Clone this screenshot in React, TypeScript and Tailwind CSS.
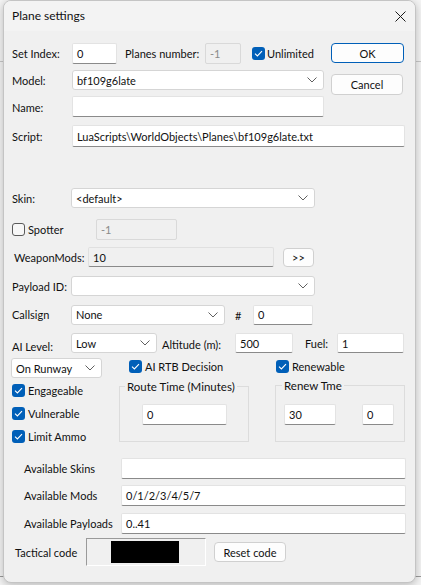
import React from "react";

const Chevron = () => (
  <svg width="10" height="6" viewBox="0 0 10 6" className="shrink-0">
    <path d="M0.5 0.5 L5 5 L9.5 0.5" stroke="#606060" strokeWidth="1" fill="none" />
  </svg>
);

function TextBox({ w, h = 21, value = "", ml = 0 }: { w: number; h?: number; value?: string; ml?: number }) {
  return (
    <div
      className="bg-white border border-[#e3e3e3] border-b-[#8a8a8a] rounded-[2px] px-[4px] flex items-center text-[#111] whitespace-nowrap overflow-hidden shrink-0"
      style={{ width: w, height: h, marginLeft: ml }}
    >
      {value}
    </div>
  );
}

function Disabled({ w, h = 21, value = "" }: { w: number; h?: number; value?: string }) {
  return (
    <div
      className="bg-[#f0f0f0] border border-[#d9d9d9] rounded-[2px] px-[4px] flex items-center text-[#8a8a8a] shrink-0"
      style={{ width: w, height: h }}
    >
      {value}
    </div>
  );
}

function Combo({ w, h = 20, value = "" }: { w: number; h?: number; value?: string }) {
  return (
    <div
      className="bg-white border border-[#d5d5d5] rounded-[3px] pl-[4px] pr-[6px] flex items-center justify-between text-[#111] shrink-0 whitespace-nowrap"
      style={{ width: w, height: h }}
    >
      <span>{value}</span>
      <Chevron />
    </div>
  );
}

function Btn({ w, h = 20, label, primary = false }: { w: number; h?: number; label: string; primary?: boolean }) {
  return (
    <div
      className={
        "bg-[#fdfdfd] rounded-[4px] flex items-center justify-center text-[#111] shrink-0 border whitespace-nowrap " +
        (primary ? "border-[#005fb8]" : "border-[#d0d0d0]")
      }
      style={{ width: w, height: h }}
    >
      {label}
    </div>
  );
}

function Check({ checked, label, gap = 3 }: { checked: boolean; label: string; gap?: number }) {
  return (
    <div className="flex items-center h-[16px] whitespace-nowrap">
      {checked ? (
        <div className="w-[13px] h-[13px] rounded-[3px] bg-[#005fb8] flex items-center justify-center shrink-0">
          <svg width="9" height="7" viewBox="0 0 9 7">
            <path d="M1 3.6 L3.4 6 L8 1.2" stroke="white" strokeWidth="1.1" fill="none" />
          </svg>
        </div>
      ) : (
        <div className="w-[13px] h-[13px] rounded-[3px] border border-[#5a5a5a] bg-[#f7f7f7] shrink-0" />
      )}
      <span style={{ marginLeft: gap }}>{label}</span>
    </div>
  );
}

export default function App() {
  return (
    <div className="relative w-[421px] h-[585px] overflow-hidden bg-[#f4f4f4] font-['Lato',sans-serif] text-[11px] leading-none text-[#111] whitespace-nowrap">
      {/* backdrop */}
      <div className="absolute left-0 right-0 top-[61px] h-px bg-[#c8c8c8]" />
      <div className="absolute left-0 right-0 top-[576px] h-px bg-[#9a9a9a]" />

      <div className="absolute left-[3px] top-0 w-[413px] h-[583px] rounded-[8px] border border-[#c4c4c4] bg-[#f0f0f0] shadow-[0_2px_8px_rgba(0,0,0,0.25)] overflow-hidden flex flex-col">
        {/* title bar */}
        <div className="h-[30px] bg-[#f3f3f3] flex items-center justify-between pl-[8px] pr-[9px] shrink-0">
          <span className="text-[12px]">Plane settings</span>
          <svg width="11" height="11" viewBox="0 0 11 11">
            <path d="M0.5 0.5 L10.5 10.5 M10.5 0.5 L0.5 10.5" stroke="#1a1a1a" strokeWidth="1" />
          </svg>
        </div>

        {/* body */}
        <div className="flex flex-col pl-[8px]">
          {/* top block */}
          <div className="flex">
            <div className="w-[319px] flex flex-col">
              <div className="flex items-center h-[21px] mt-[12px]">
                <span className="w-[60px]">Set Index:</span>
                <TextBox w={45} value="0" />
                <span className="w-[80px] ml-[8px]">Planes number:</span>
                <Disabled w={36} value="-1" />
                <div className="ml-[11px]">
                  <Check checked label="Unlimited" gap={2} />
                </div>
              </div>
              <div className="flex items-center h-[20px] mt-[6px]">
                <span className="w-[60px]">Model:</span>
                <Combo w={252} value="bf109g6late" />
              </div>
              <div className="flex items-center h-[21px] mt-[6px]">
                <span className="w-[60px] mt-[2px]">Name:</span>
                <TextBox w={252} />
              </div>
            </div>
            <div className="flex flex-col">
              <div className="mt-[12px]">
                <Btn w={73} h={20} label="OK" primary />
              </div>
              <div className="mt-[11px]">
                <Btn w={72} h={21} label="Cancel" />
              </div>
            </div>
          </div>

          <div className="flex items-center h-[22px] mt-[8px]">
            <span className="w-[60px]">Script:</span>
            <TextBox w={333} h={22} value="LuaScripts\WorldObjects\Planes\bf109g6late.txt" />
          </div>

          <div className="flex items-center h-[20px] mt-[41px]">
            <span className="w-[59px]">Skin:</span>
            <Combo w={244} value="<default>" />
          </div>

          <div className="flex items-center h-[21px] mt-[11px]">
            <div className="w-[84px]">
              <Check checked={false} label="Spotter" />
            </div>
            <Disabled w={81} value="-1" />
          </div>

          <div className="flex items-center h-[20px] mt-[7px]">
            <span className="w-[74px] ml-[2px]">WeaponMods:</span>
            <div className="w-[186px] h-[20px] bg-[#f0f0f0] border border-[#e0e0e0] border-b-[#8a8a8a] rounded-[2px] px-[4px] flex items-center">
              10
            </div>
            <div className="ml-[9px]">
              <Btn w={31} h={19} label=">>" />
            </div>
          </div>

          <div className="flex items-center h-[20px] mt-[9px]">
            <span className="w-[59px]">Payload ID:</span>
            <Combo w={244} />
          </div>

          <div className="flex items-center h-[21px] mt-[8px]">
            <span className="w-[59px]">Callsign</span>
            <Combo w={154} value="None" />
            <span className="w-[18px] ml-[10px] mt-[2px]">#</span>
            <TextBox w={60} h={20} value="0" />
          </div>

          <div className="flex items-center h-[20px] mt-[8px]">
            <span className="w-[59px] mt-[6px]">AI Level:</span>
            <Combo w={86} value="Low" />
            <span className="w-[73px] ml-[5px] mt-[2px]">Altitude (m):</span>
            <TextBox w={58} h={20} value="500" />
            <span className="w-[32px] ml-[12px]">Fuel:</span>
            <TextBox w={67} h={20} value="1" />
          </div>

          {/* lower section */}
          <div className="flex h-[84px] mt-[5px] -ml-[1px]">
            <div className="w-[91px] flex flex-col">
              <Combo w={91} h={20} value="On Runway" />
              <div className="ml-[1px] mt-[4px] flex flex-col gap-[7px]">
                <Check checked label="Engageable" />
                <Check checked label="Vulnerable" />
                <Check checked label="Limit Ammo" />
              </div>
            </div>
            <div className="w-[130px] ml-[17px] flex flex-col">
              <div className="ml-[10px]">
                <Check checked label="AI RTB Decision" />
              </div>
              <fieldset className="mt-[7px] h-[62px] min-w-0 border border-[#dcdcdc] px-[22px]">
                <legend className="-ml-[17px] px-[2px] text-[11.5px]">Route Time (Minutes)</legend>
                <div className="mt-[11px]">
                  <TextBox w={85} h={21} value="0" />
                </div>
              </fieldset>
            </div>
            <div className="w-[130px] ml-[26px] flex flex-col">
              <div className="ml-[1px]">
                <Check checked label="Renewable" />
              </div>
              <fieldset className="mt-[6px] h-[63px] min-w-0 border border-[#dcdcdc] px-[8px]">
                <legend className="-ml-[2px] px-[2px] text-[11.5px]">Renew Tme</legend>
                <div className="mt-[12px] flex">
                  <TextBox w={52} h={21} value="30" />
                  <TextBox w={32} h={21} value="0" ml={26} />
                </div>
              </fieldset>
            </div>
          </div>

          {/* available */}
          <div className="flex items-center h-[21px] mt-[16px]">
            <span className="w-[97px] ml-[12px]">Available Skins</span>
            <TextBox w={285} />
          </div>
          <div className="flex items-center h-[21px] mt-[6px]">
            <span className="w-[97px] ml-[12px]">Available Mods</span>
            <TextBox w={285} value="0/1/2/3/4/5/7" />
          </div>
          <div className="flex items-center h-[21px] mt-[7px]">
            <span className="w-[97px] ml-[12px]">Available Payloads</span>
            <TextBox w={285} value="0..41" />
          </div>

          <div className="flex items-center h-[28px] mt-[4px]">
            <span className="w-[71px] ml-[3px]">Tactical code</span>
            <div className="w-[120px] h-[28px] border border-t-[#9a9a9a] border-l-[#9a9a9a] border-b-white border-r-white bg-[#f0f0f0] flex items-center justify-center">
              <div className="w-[68px] h-[22px] bg-black -ml-[2px]" />
            </div>
            <div className="ml-[8px]">
              <Btn w={72} h={20} label="Reset code" />
            </div>
          </div>
        </div>
      </div>
    </div>
  );
}
